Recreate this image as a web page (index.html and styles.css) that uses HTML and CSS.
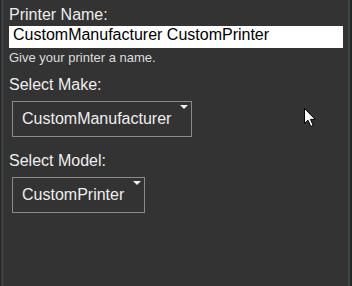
FILE: index.html
```html
<!DOCTYPE html>
<html>
<head>
    <title>Add Printer</title>
    <link rel="stylesheet" href="styles.css">
</head>
<body>
    <div class="panel">
        <div class="field-label">Printer Name:</div>
        <div class="text-input">CustomManufacturer CustomPrinter</div>
        <div class="hint">Give your printer a name.</div>

        <div class="field-label make-label">Select Make:</div>
        <div class="select-box">
            <span>CustomManufacturer</span>
            <span class="arrow"></span>
        </div>

        <div class="field-label model-label">Select Model:</div>
        <div class="select-box">
            <span>CustomPrinter</span>
            <span class="arrow"></span>
        </div>
    </div>

    <!-- mouse pointer over the panel -->
    <svg class="pointer" width="14" height="20" viewBox="0 0 14 20">
        <path d="M0.5 0.5 L0.5 15.5 L4 12.2 L6.8 18.5 L9.2 17.4 L6.5 11.4 L11.2 11.4 Z" fill="#fff" stroke="#000" stroke-width="1"/>
    </svg>
</body>
</html>
```

FILE: styles.css
```css
body {
    margin: 0;
    height: 286px;
    background-color: #1f2a2d;
    font-family: 'Liberation Sans', Arial, sans-serif;
    overflow: hidden;
    position: relative;
}

.panel {
    margin-left: 1px;
    margin-right: 2px;
    height: 286px;
    box-sizing: border-box;
    background-color: #333333;
    border-left: 3px solid #3d3d3d;
    border-right: 2px solid #454545;
    padding: 6px 5px 0 5px;
    color: #eeeeee;
}

.field-label {
    font-size: 16px;
    line-height: 18px;
}

.text-input {
    margin-top: 2px;
    background-color: #ffffff;
    color: #000000;
    font-size: 16px;
    line-height: 18px;
    padding: 0 4px 4px 4px;
}

.hint {
    margin-top: 2px;
    font-size: 13px;
    line-height: 15px;
    color: #dddddd;
}

.make-label {
    margin-top: 11px;
}

.model-label {
    margin-top: 15px;
}

.select-box {
    position: relative;
    display: inline-block;
    margin: 7px 0 0 3px;
    border: 1px solid #8a8a8a;
    padding: 0 20px 0 9px;
    font-size: 16px;
    line-height: 34px;
    color: #eeeeee;
}

    .select-box .arrow {
        position: absolute;
        top: 3px;
        right: 3px;
        width: 0;
        height: 0;
        border-left: 4px solid transparent;
        border-right: 4px solid transparent;
        border-top: 4px solid #eeeeee;
    }

.pointer {
    position: absolute;
    left: 304px;
    top: 108px;
}
```
